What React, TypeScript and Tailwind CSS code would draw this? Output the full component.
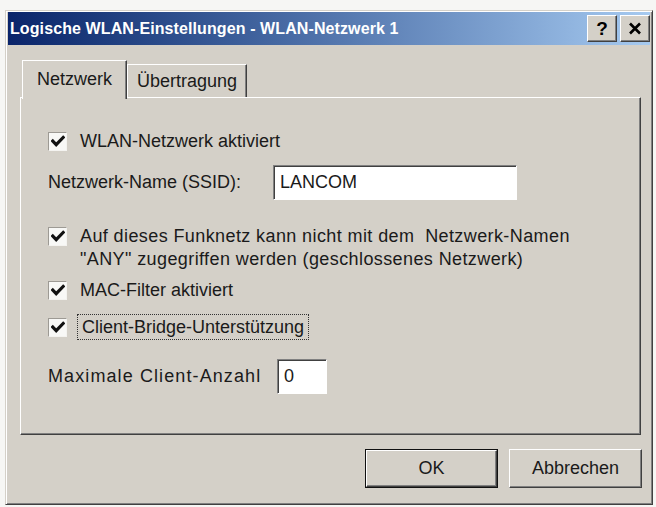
import type { ReactNode } from 'react';

// Classic 3D bevels used across the dialog
const RAISED =
  'border border-t-white border-l-white border-r-[#404040] border-b-[#404040] shadow-[inset_-1px_-1px_0_#808080]';
const SUNKEN =
  'border border-t-[#808080] border-l-[#808080] border-r-white border-b-white shadow-[inset_1px_1px_0_#404040]';

function CheckMark() {
  return (
    <svg width="14" height="13" viewBox="0 0 14 13" className="block">
      <polyline points="1.8,6 5.2,9.6 12.2,2.4" fill="none" stroke="#111" strokeWidth="3.2" strokeLinecap="square" />
    </svg>
  );
}

function Box() {
  return (
    <div className="flex h-[19px] w-[19px] shrink-0 items-center justify-center border border-t-[#9d9a94] border-l-[#9d9a94] border-r-[#f4f3f0] border-b-[#f4f3f0] bg-[#f8f8f6]">
      <CheckMark />
    </div>
  );
}

function CheckRow({ children, className = '' }: { children: ReactNode; className?: string }) {
  return (
    <div className={`flex items-center gap-[13px] ${className}`}>
      <Box />
      <span>{children}</span>
    </div>
  );
}

function TitleButton({ children }: { children: ReactNode }) {
  return (
    <div className={`flex h-[27px] w-[30px] items-center justify-center bg-[#d4d0c8] ${RAISED}`}>{children}</div>
  );
}

function DialogButton({ label, isDefault }: { label: string; isDefault?: boolean }) {
  const inner = (
    <div className={`flex h-full w-full items-center justify-center bg-[#d4d0c8] ${RAISED}`}>{label}</div>
  );
  return isDefault ? (
    <div className="h-[39px] w-[133px] border border-[#111]">{inner}</div>
  ) : (
    <div className="h-[39px] w-[133px]">{inner}</div>
  );
}

export default function App() {
  return (
    <div className="h-[507px] w-[656px] bg-[#f6f6f4] pl-[5px] pt-[10px] font-['Liberation_Sans',Arial,sans-serif] text-[18px] leading-[23px] text-[#1a1a1a]">
      <div className="flex h-[495px] w-[648px] flex-col border border-t-[#d4d0c8] border-l-[#d4d0c8] border-r-[#404040] border-b-[#404040] bg-[#d4d0c8] px-[2px] pt-[1px] shadow-[inset_1px_1px_0_#fff,inset_-1px_-1px_0_#808080]">
        {/* title bar */}
        <div className="flex h-[33px] items-center justify-between bg-linear-to-r from-[#0a246a] to-[#a6caf0] pl-[2px]">
          <span className="text-[16px] font-bold tracking-[0.1px] text-white">
            Logische WLAN-Einstellungen - WLAN-Netzwerk 1
          </span>
          <div className="flex gap-[3px]">
            <TitleButton>
              <span className="text-[19px] font-bold leading-none text-black">?</span>
            </TitleButton>
            <TitleButton>
              <svg width="14" height="13" viewBox="0 0 14 13">
                <path d="M2 1.5 L12 11.5 M12 1.5 L2 11.5" stroke="#000" strokeWidth="2.6" />
              </svg>
            </TitleButton>
          </div>
        </div>

        {/* tabs */}
        <div className="ml-[12px] mr-[9px] mt-[15px]">
          <div className="flex items-end pl-[2px]">
            <div className="relative z-10 -mb-[2px] h-[39px] border border-b-0 border-t-white border-l-white border-r-[#404040] bg-[#d4d0c8] px-[14px] pt-[7px] shadow-[inset_-1px_0_0_#808080]">
              Netzwerk
            </div>
            <div className="h-[33px] border border-b-0 border-t-white border-l-white border-r-[#404040] px-[9px] pt-[5px] shadow-[inset_-1px_0_0_#808080]">
              Übertragung
            </div>
          </div>

          <div className={`h-[338px] pl-[27px] pt-[31px] ${RAISED}`}>
            <CheckRow className="h-[24px]">WLAN-Netzwerk aktiviert</CheckRow>

            <div className="mt-[12px] flex items-center">
              <span className="w-[225px]">Netzwerk-Name (SSID):</span>
              <div className={`flex h-[35px] w-[244px] items-center bg-white pl-[6px] ${SUNKEN}`}>LANCOM</div>
            </div>

            <div className="mt-[25px] flex items-start gap-[13px]">
              <div className="mt-[2px]">
                <Box />
              </div>
              <span className="tracking-[0.4px]">
                Auf dieses Funknetz kann nicht mit dem&nbsp; Netzwerk-Namen
                <br />
                &quot;ANY&quot; zugegriffen werden (geschlossenes Netzwerk)
              </span>
            </div>

            <CheckRow className="mt-[7px] h-[24px]">MAC-Filter aktiviert</CheckRow>

            <div className="mt-[11px] flex h-[28px] items-center gap-[10px]">
              <Box />
              <span className="border border-dotted border-[#333] px-[4px] leading-[24px]">
                Client-Bridge-Unterstützung
              </span>
            </div>

            <div className="mt-[18px] flex items-center">
              <span className="w-[229px] tracking-[1.1px]">Maximale Client-Anzahl</span>
              <div className={`flex h-[35px] w-[50px] items-center bg-white pl-[6px] ${SUNKEN}`}>0</div>
            </div>
          </div>
        </div>

        {/* dialog buttons */}
        <div className="mr-[8px] mt-[14px] flex justify-end gap-[11px]">
          <DialogButton label="OK" isDefault />
          <DialogButton label="Abbrechen" />
        </div>
      </div>
    </div>
  );
}
